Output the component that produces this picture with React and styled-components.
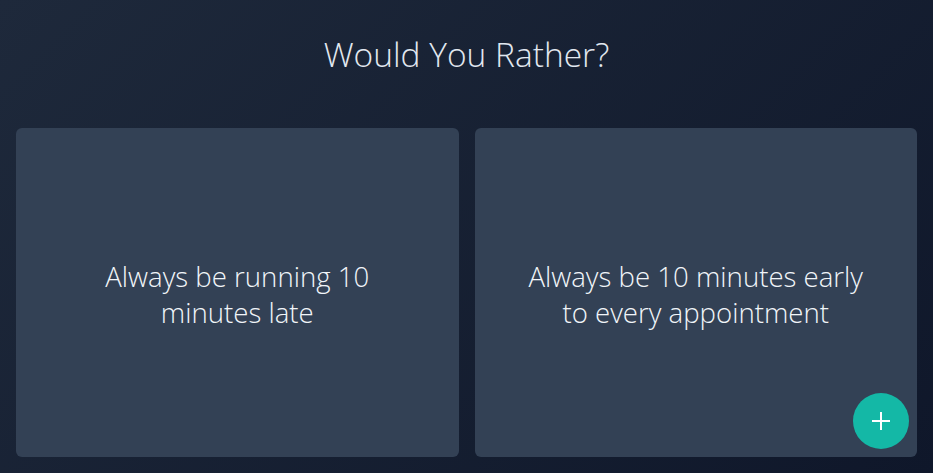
import React from 'react'
import styled, { createGlobalStyle } from 'styled-components'

const GlobalStyle = createGlobalStyle`
  * { box-sizing: border-box; }
  html, body { margin: 0; padding: 0; height: 100%; }
  body {
    font-family: "Open Sans", "Noto Sans", sans-serif;
    background: #0f172a;
  }
  #root { height: 100%; }
`

const Page = styled.div`
  position: relative;
  height: 100vh;
  display: flex;
  flex-direction: column;
  padding: 0 16px 16px;
  background: linear-gradient(135deg, #1e293b 0%, #0f172a 100%);
  color: #f1f5f9;
`

const Header = styled.header`
  height: 128px;
  flex-shrink: 0;
  padding-top: 31px;
  text-align: center;
`

const Title = styled.h1`
  margin: 0;
  font-size: 33.5px;
  line-height: 46px;
  font-weight: 300;
  color: #e2e8f0;
`

const Options = styled.main`
  flex: 1;
  display: grid;
  grid-template-columns: 1fr 1fr;
  gap: 16px;
`

const OptionCard = styled.button`
  border: none;
  border-radius: 6px;
  background: #334155;
  color: #f1f5f9;
  font-family: inherit;
  font-size: 27.6px;
  font-weight: 300;
  line-height: 36px;
  display: flex;
  align-items: center;
  justify-content: center;
  padding: 2px 40px 0;
  text-align: center;
  cursor: pointer;
`

const Fab = styled.button`
  position: absolute;
  right: 24px;
  bottom: 24px;
  width: 56px;
  height: 56px;
  border-radius: 50%;
  border: none;
  background: #14b8a6;
  display: flex;
  align-items: center;
  justify-content: center;
  cursor: pointer;
`

const options = [
  'Always be running 10 minutes late',
  'Always be 10 minutes early to every appointment',
]

export default function App() {
  return (
    <>
      <GlobalStyle />
      <Page>
        <Header>
          <Title>Would You Rather?</Title>
        </Header>
        <Options>
          {options.map((o) => (
            <OptionCard key={o}>{o}</OptionCard>
          ))}
        </Options>
        <Fab aria-label="Add">
          <svg width="20" height="20" viewBox="0 0 20 20">
            <path d="M10 1v18M1 10h18" stroke="#ffffff" strokeWidth="2" />
          </svg>
        </Fab>
      </Page>
    </>
  )
}
